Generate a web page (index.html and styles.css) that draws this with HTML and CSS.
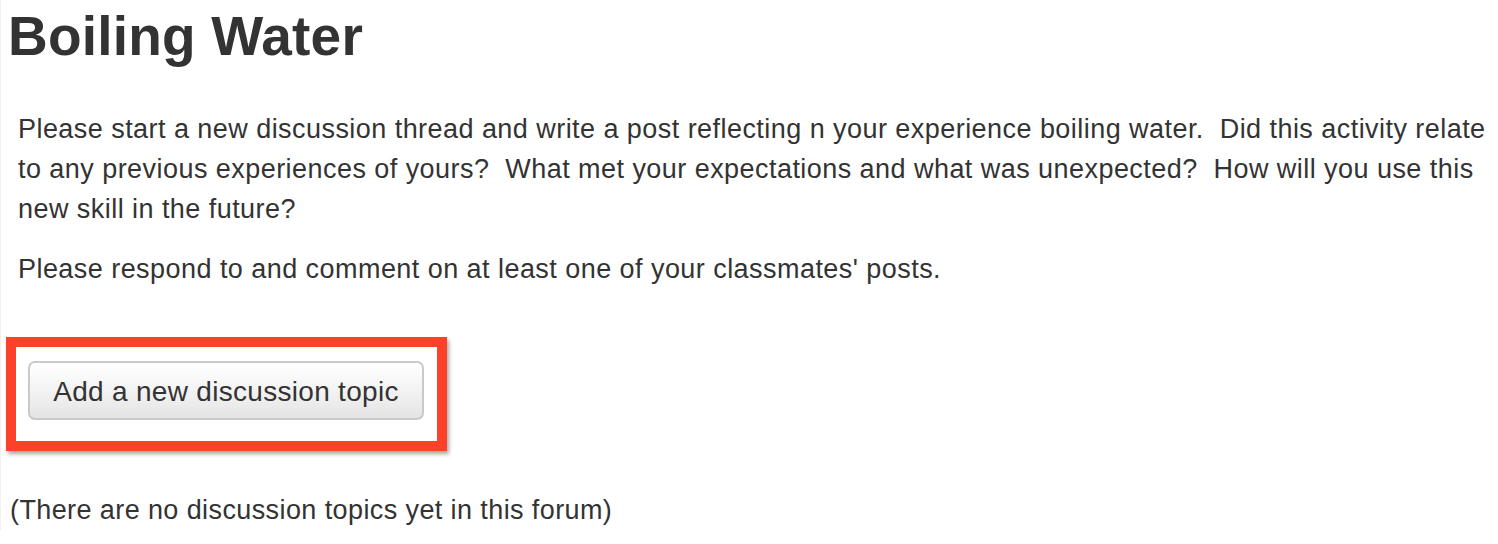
FILE: index.html
```html
<!DOCTYPE html>
<html>
<head>
<meta charset="utf-8">
<link rel="stylesheet" href="styles.css">
</head>
<body>
<div class="page">
  <h1 class="title">Boiling Water</h1>
  <div class="intro">
    <p>Please start a new discussion thread and write a post reflecting n your experience boiling water.&nbsp; Did this activity relate to any previous experiences of yours?&nbsp; What met your expectations and what was unexpected?&nbsp; How will you use this new skill in the future?</p>
    <p>Please respond to and comment on at least one of your classmates' posts.</p>
  </div>
  <div class="highlight">
    <button class="btn" type="button">Add a new discussion topic</button>
  </div>
  <p class="empty">(There are no discussion topics yet in this forum)</p>
</div>
</body>
</html>
```
FILE: styles.css
```css
html, body {
  margin: 0;
  padding: 0;
  background: #fff;
}
body {
  font-family: "Liberation Sans", Arial, Helvetica, sans-serif;
  color: #333;
}
.page {
  display: flex;
  flex-direction: column;
  align-items: flex-start;
  padding: 0 8px 0 8px;
  border-left: 1px solid #f0f0f0;
}
.title {
  margin: 3px 0 0 -1px;
  font-size: 55px;
  line-height: 66px;
  letter-spacing: 0.2px;
  font-weight: bold;
  color: #333;
}
.intro {
  margin-top: 40px;
  padding-left: 9px;
  padding-right: 0;
}
.intro p {
  margin: 0 0 20px 0;
  font-size: 27px;
  line-height: 40px;
  letter-spacing: 0.45px;
}
.intro p:last-child {
  margin-bottom: 0;
}
.highlight {
  margin-top: 48px;
  margin-left: -3px;
  box-sizing: border-box;
  width: 441px;
  height: 114px;
  border: 10px solid #fc4129;
  box-shadow: 2px 3px 4px rgba(0, 0, 0, 0.35);
  padding: 14px 0 0 12px;
  display: flex;
  align-items: flex-start;
}
.btn {
  box-sizing: border-box;
  height: 59px;
  width: 396px;
  padding: 2px 0 0 0;
  font-family: "Liberation Sans", Arial, Helvetica, sans-serif;
  font-size: 28px;
  letter-spacing: 0.3px;
  color: #333;
  border: 2px solid #c9c9c9;
  border-radius: 7px;
  background: linear-gradient(to bottom, #ffffff 0%, #f3f3f3 50%, #e4e4e4 100%);
  display: flex;
  align-items: center;
  justify-content: center;
}
.empty {
  margin: 39px 0 0 1px;
  font-size: 27px;
  line-height: 40px;
  letter-spacing: 0.4px;
}
```
